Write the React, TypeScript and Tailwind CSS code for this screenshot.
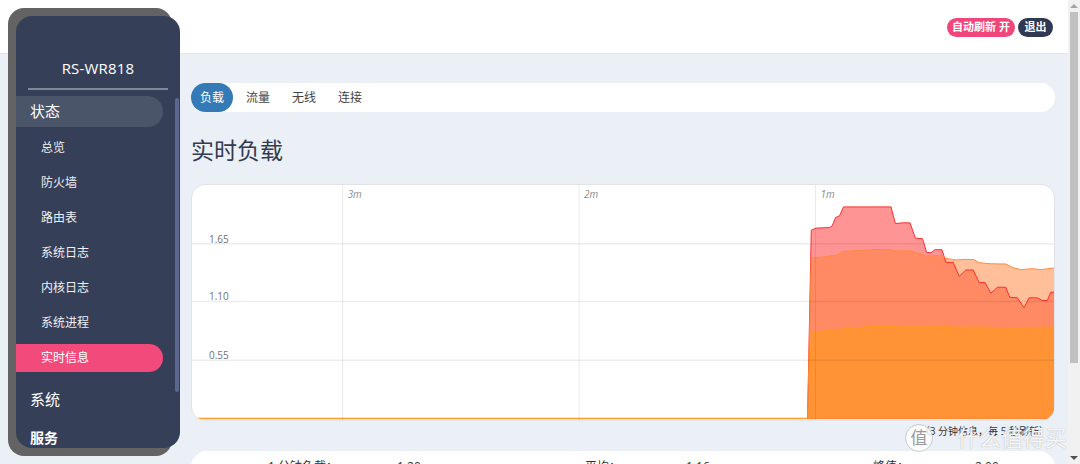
import React from "react";

const subItems = ["总览", "防火墙", "路由表", "系统日志", "内核日志", "系统进程", "实时信息"];
const tabs = ["负载", "流量", "无线", "连接"];

const redPts =
  "617,234.5 620.7,45.3 625.7,43.3 639,42.7 641.7,41 645,32.7 649,31 653,22 700.7,22 705,38.7 712.3,38 719.7,38 725,53.3 732.3,54 736.3,67.7 740.7,68 744.7,65 751.7,65 755.7,77.7 763,77.7 769,91.7 775.7,85.3 783,85.3 789,98 795,98 800.7,108.7 807.3,102.7 815.7,102.7 819.7,112.7 827.3,113.3 834,123.3 839,113.3 847.3,113.3 852.3,116 857.3,116 860.7,107.7 864,107.7";
const midPts =
  "617,234.5 620.7,73.3 635.7,72 647.3,70 652.3,66.7 675.7,65.3 689,64.7 700.7,65 707.3,66.3 722.3,66.3 735.7,71.3 752.3,70.7 755.7,73.7 765.7,75.3 774,74.7 784,75 789,78 799,79 809,79.3 815.7,79.3 822.3,82.7 830.7,85 842.3,84 850.7,85 864,83.3";
const lowPts =
  "618,234.5 620.7,147.7 639,146 672.3,142.7 695.7,141.7 715.7,141.3 745.7,141.3 762.3,142.7 789,142.7 822.3,143.3 864,142.7";

function Sidebar() {
  return (
    <aside className="absolute left-4 top-4 w-[164px] h-[432px] rounded-[16px] bg-[#363f58] text-white shadow-[-8px_-8px_0_0_#636363,-8px_8px_0_0_#636363]">
      <div className="h-[72px] flex items-end justify-center pb-[9px] text-[15px] tracking-[0.2px]">
        RS-WR818
      </div>
      <div className="mx-3 h-[2px] bg-[#7f8799]" />
      <div className="relative h-[352px] mt-[6px] overflow-hidden rounded-b-[16px]">
        <div className="absolute right-[1px] top-[2px] w-[4px] h-[294px] rounded-full bg-[#5a6891]" />
        <div className="-ml-2 w-[155px] h-[31px] rounded-r-full bg-[#4b5569] flex items-center pl-[22px] text-[15px]">
          状态
        </div>
        <ul className="mt-[3px]">
          {subItems.map((s) => {
            const active = s === "实时信息";
            return (
              <li key={s} className="h-[35px] flex items-center">
                <div
                  className={
                    active
                      ? "w-[147px] h-[28px] rounded-r-full bg-[#f24b7b] flex items-center pl-[25px] text-[12px]"
                      : "pl-[25px] text-[12px] text-[#eef0f4]"
                  }
                >
                  {s}
                </div>
              </li>
            );
          })}
        </ul>
        <div className="h-[48px] flex items-center pl-[14px] text-[15px]">系统</div>
        <div className="h-[28px] flex items-center pl-[14px] text-[14px] font-semibold">服务</div>
      </div>
    </aside>
  );
}

function Chart() {
  const vx = [151, 388, 625];
  const vlabels = ["3m", "2m", "1m"];
  const hy = [59, 117, 176];
  const hlabels = ["1.65", "1.10", "0.55"];
  return (
    <div className="h-[237px] rounded-[14px] border border-[#e0e3e8] bg-white overflow-hidden">
      <svg viewBox="0 0 864 236" preserveAspectRatio="none" className="w-full h-full block">
        <line x1="0" y1="234.5" x2="864" y2="234.5" stroke="#ff9a2e" strokeWidth="1.5" />
        <polygon points={`${redPts} 864,234.5`} fill="rgba(255,0,0,0.42)" />
        <polygon points={`${midPts} 864,234.5`} fill="rgba(255,127,51,0.5)" />
        <polygon points={`${lowPts} 864,234.5`} fill="#ff9336" />
        <polyline points={redPts} fill="none" stroke="#ff2d2d" strokeWidth="1" />
        <polyline points={midPts} fill="none" stroke="#ff8a3d" strokeWidth="1" />
        <polyline points={lowPts} fill="none" stroke="#ff9a1a" strokeWidth="1" />
        {vx.map((x, i) => (
          <g key={x}>
            <line x1={x} y1="0" x2={x} y2="236" stroke="rgba(0,0,0,0.09)" strokeWidth="1" />
            <text x={x + 5} y="13" fontSize="10" fill="#8a8a8a" fontStyle="italic">
              {vlabels[i]}
            </text>
          </g>
        ))}
        {hy.map((y, i) => (
          <g key={y}>
            <line x1="0" y1={y} x2="864" y2={y} stroke="rgba(0,0,0,0.07)" strokeWidth="1.5" />
            <text x="17" y={y - 1} fontSize="10" fill="#6f6f6f">
              {hlabels[i]}
            </text>
          </g>
        ))}
      </svg>
    </div>
  );
}

export default function App() {
  return (
    <div className="w-[1080px] h-[464px] overflow-hidden flex bg-[#ebeff6] font-[family-name:'Open_Sans','Noto_Sans_CJK_SC',sans-serif] text-[#333]">
      <div className="relative flex-1 flex flex-col">
        <header className="h-[54px] shrink-0 bg-white border-b border-[#dfe3ea] flex items-start justify-end pt-[18px] pr-[15px] gap-[3px]">
          <span className="h-[19px] w-[68px] rounded-full bg-[#f0467b] text-white text-[11px] font-semibold flex items-center justify-center">
            自动刷新 开
          </span>
          <span className="h-[19px] w-[35px] rounded-full bg-[#2f3a52] text-white text-[11px] font-semibold flex items-center justify-center">
            退出
          </span>
        </header>

        <main className="pl-[191px] pr-[13px] pt-[29px]">
          <nav className="h-[29px] rounded-full bg-white flex items-center gap-[4px] text-[12px]">
            {tabs.map((t, i) => (
              <span
                key={t}
                className={
                  i === 0
                    ? "h-[29px] px-[9px] rounded-full bg-[#337ab7] text-white flex items-center"
                    : "h-[29px] px-[9px] text-[#444] flex items-center"
                }
              >
                {t}
              </span>
            ))}
          </nav>

          <h1 className="mt-[23px] h-[49px] text-[23px] leading-[30px] text-[#333b4d]">实时负载</h1>

          <Chart />

          <p className="h-[30px] pt-[3px] pr-[6px] text-right text-[10px] text-[#333]">
            （3 分钟信息，每 5 秒刷新）
          </p>

          <div className="h-[40px] rounded-t-[16px] bg-white pt-[8px] flex text-[12px] leading-[16px] text-[#333]">
            <span className="w-[77px]" />
            <span className="w-[129px]">1 分钟负载：</span>
            <span className="w-[188px]">1.20</span>
            <span className="w-[101px]">平均：</span>
            <span className="w-[187px]">1.16</span>
            <span className="w-[67px]">峰值：</span>
            <span className="w-[35px] pt-[4px]">
              <span className="block w-[22px] h-[3px] bg-[#3cb043] -rotate-12 mt-[4px]" />
            </span>
            <span>2.00</span>
          </div>
        </main>

        <Sidebar />

        <div className="absolute left-[905px] top-[421px] flex items-center gap-[24px] pointer-events-none">
          <span className="w-[28px] h-[28px] rounded-full bg-white/80 border border-[#c9c9c9] flex items-center justify-center text-[17px] text-[#9a9a9a]">
            值
          </span>
          <span className="text-[22px] text-white/90 [text-shadow:0_0_1px_#9a9a9a]">
            什么值得买
          </span>
        </div>
      </div>

      <div className="w-[12px] h-full bg-[#f1f1f1] flex flex-col items-center">
        <span className="mt-[4px] h-0 w-0 border-x-[4px] border-x-transparent border-b-[4px] border-b-[#a3a3a3]" />
        <span className="mt-[4px] w-[8px] h-[351px] bg-[#c1c1c1]" />
        <span className="mt-auto mb-[4px] h-0 w-0 border-x-[4px] border-x-transparent border-t-[4px] border-t-[#505050]" />
      </div>
    </div>
  );
}
